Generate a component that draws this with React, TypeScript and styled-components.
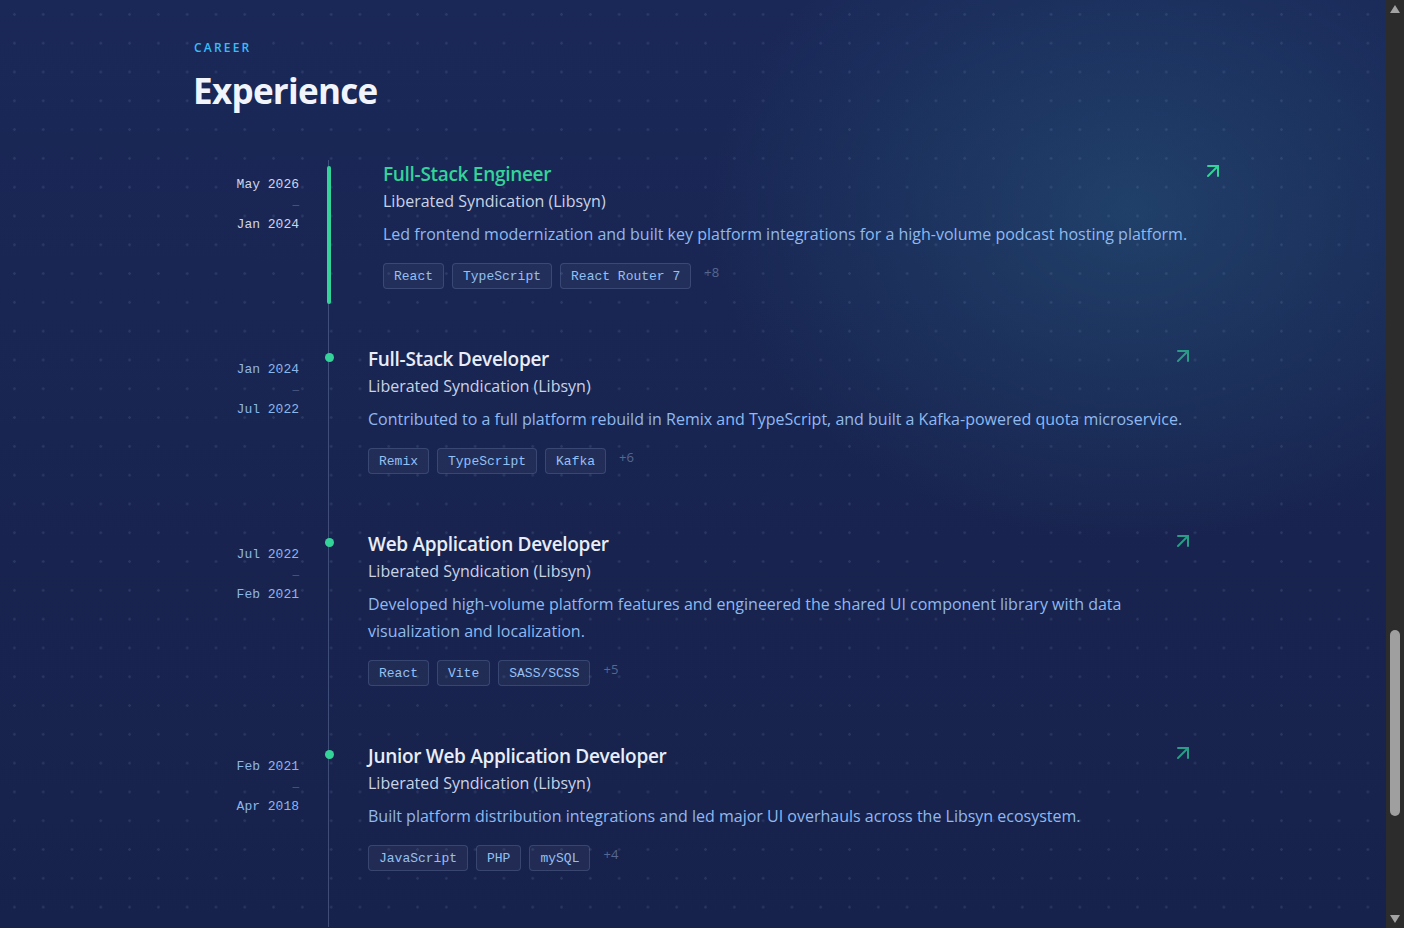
import React, { FC, ReactElement } from 'react'
import styled, { createGlobalStyle, css } from 'styled-components'
import { ArrowUpRight } from 'lucide-react'

const GlobalStyle = createGlobalStyle`
  html, body {
    margin: 0;
    padding: 0;
    height: 100%;
    overflow: hidden;
    background: #18244f;
  }
  * {
    box-sizing: border-box;
  }
`

const Page = styled.div`
  display: flex;
  height: 100vh;
  width: 100vw;
`

const Main = styled.main`
  flex: 1;
  min-width: 0;
  overflow: hidden;
  background-color: #18244f;
  background-image:
    radial-gradient(circle at center, rgba(148, 170, 210, 0.14) 1px, transparent 1.6px),
    radial-gradient(560px 440px at 1130px 210px, rgba(40, 95, 130, 0.45), transparent 75%),
    linear-gradient(180deg, #1a2858 0%, #18244f 60%, #17224c 100%);
  background-size: 28.8px 28.8px, 100% 100%, 100% 100%;
  font-family: 'Open Sans', 'Noto Sans', sans-serif;
`

const Container = styled.section`
  max-width: 1000px;
  margin: 0 auto;
  padding: 39px 0 0 1px;
`

const Eyebrow = styled.div`
  font-size: 12px;
  line-height: 18px;
  letter-spacing: 2.2px;
  font-weight: 600;
  color: #38bdf8;
  text-transform: uppercase;
`

const Heading = styled.h2`
  margin: 12px 0 0 -1px;
  font-size: 35px;
  line-height: 44px;
  font-weight: 700;
  color: #f1f5fb;
  letter-spacing: -0.7px;
`

const Timeline = styled.div`
  margin-top: 47px;
`

const Row = styled.div`
  display: grid;
  grid-template-columns: 105px 1fr;
  column-gap: 29px;
`

const Dates = styled.div<{ $active?: boolean }>`
  padding-top: 15px;
  text-align: right;
  font-family: 'Liberation Mono', 'DejaVu Sans Mono', monospace;
  font-size: 13px;
  line-height: 20px;
  color: ${(p) => (p.$active ? '#cdd6e8' : '#8cb6ea')};
`

const DateDash = styled.div`
  font-size: 11px;
  color: #4d5d86;
`

const Body = styled.div`
  position: relative;
  border-left: 1px solid rgba(110, 128, 170, 0.45);
  padding: 0 0 56px 39px;
`

const Dot = styled.span`
  position: absolute;
  left: -4px;
  top: 8px;
  width: 9px;
  height: 9px;
  border-radius: 50%;
  background: #34d399;
`

const ActiveBar = styled.span`
  position: absolute;
  left: -2px;
  top: 6px;
  bottom: 41px;
  width: 4px;
  border-radius: 2px;
  background: #34d399;
`

const Card = styled.article<{ $active?: boolean }>`
  ${(p) =>
    p.$active &&
    css`
      transform: translateX(15px);
    `}
`

const TitleRow = styled.div`
  display: flex;
  justify-content: space-between;
  align-items: flex-start;
`

const Title = styled.h3<{ $active?: boolean }>`
  margin: 0;
  font-size: 19px;
  line-height: 28px;
  font-weight: 600;
  letter-spacing: -0.3px;
  color: ${(p) => (p.$active ? '#34d399' : '#e8edf7')};
`

const LinkIcon = styled.span<{ $active?: boolean }>`
  display: flex;
  margin: -1px -2px 0 0;
  color: ${(p) => (p.$active ? '#34d399' : '#2a9c87')};
  ${(p) =>
    p.$active &&
    css`
      transform: translateX(15px);
    `}
`

const Company = styled.div`
  font-size: 16px;
  line-height: 26px;
  color: #c9d3e6;
`

const Description = styled.p`
  margin: 7px 0 0;
  max-width: 826px;
  font-size: 16px;
  line-height: 27px;
  color: #8fb9f0;
`

const Tags = styled.div`
  display: flex;
  align-items: flex-start;
  gap: 8px;
  margin-top: 15px;
`

const Tag = styled.span`
  display: inline-flex;
  align-items: center;
  height: 26px;
  padding: 0 10px;
  border: 1px solid rgba(120, 140, 185, 0.28);
  border-radius: 4px;
  background: rgba(255, 255, 255, 0.045);
  font-family: 'Liberation Mono', 'DejaVu Sans Mono', monospace;
  font-size: 13px;
  color: #93c0f5;
`

const More = styled.span`
  margin-left: 5px;
  font-size: 13px;
  line-height: 18px;
  color: #566791;
`

const Scrollbar = styled.aside`
  width: 18px;
  flex-shrink: 0;
  display: flex;
  flex-direction: column;
  align-items: center;
  background: #2c2c2c;
`

const ScrollArrow = styled.span<{ $down?: boolean }>`
  height: 18px;
  display: flex;
  align-items: center;
  justify-content: center;

  &::before {
    content: '';
    border-left: 5px solid transparent;
    border-right: 5px solid transparent;
    ${(p) =>
      p.$down
        ? css`
            border-top: 8px solid #a3a3a3;
          `
        : css`
            border-bottom: 8px solid #a3a3a3;
          `}
  }
`

const Track = styled.div`
  flex: 1;
  width: 100%;
  display: flex;
  justify-content: center;
  padding-top: 612px;
`

const Thumb = styled.div`
  width: 10px;
  height: 186px;
  border-radius: 5px;
  background: #9f9f9f;
`

interface Job {
  from: string
  to: string
  title: string
  company: string
  description: string
  tags: string[]
  more: number
  active?: boolean
}

const jobs: Job[] = [
  {
    from: 'May 2026',
    to: 'Jan 2024',
    title: 'Full-Stack Engineer',
    company: 'Liberated Syndication (Libsyn)',
    description:
      'Led frontend modernization and built key platform integrations for a high-volume podcast hosting platform.',
    tags: ['React', 'TypeScript', 'React Router 7'],
    more: 8,
    active: true,
  },
  {
    from: 'Jan 2024',
    to: 'Jul 2022',
    title: 'Full-Stack Developer',
    company: 'Liberated Syndication (Libsyn)',
    description:
      'Contributed to a full platform rebuild in Remix and TypeScript, and built a Kafka-powered quota microservice.',
    tags: ['Remix', 'TypeScript', 'Kafka'],
    more: 6,
  },
  {
    from: 'Jul 2022',
    to: 'Feb 2021',
    title: 'Web Application Developer',
    company: 'Liberated Syndication (Libsyn)',
    description:
      'Developed high-volume platform features and engineered the shared UI component library with data visualization and localization.',
    tags: ['React', 'Vite', 'SASS/SCSS'],
    more: 5,
  },
  {
    from: 'Feb 2021',
    to: 'Apr 2018',
    title: 'Junior Web Application Developer',
    company: 'Liberated Syndication (Libsyn)',
    description:
      'Built platform distribution integrations and led major UI overhauls across the Libsyn ecosystem.',
    tags: ['JavaScript', 'PHP', 'mySQL'],
    more: 4,
  },
]

const ExperienceItem: FC<{ job: Job }> = ({ job }) => {
  return (
    <Row>
      <Dates $active={job.active}>
        <div>{job.from}</div>
        <DateDash>—</DateDash>
        <div>{job.to}</div>
      </Dates>
      <Body>
        {job.active ? <ActiveBar /> : <Dot />}
        <Card $active={job.active}>
          <TitleRow>
            <Title $active={job.active}>{job.title}</Title>
            <LinkIcon $active={job.active}>
              <ArrowUpRight size={24} strokeWidth={2} />
            </LinkIcon>
          </TitleRow>
          <Company>{job.company}</Company>
          <Description>{job.description}</Description>
          <Tags>
            {job.tags.map((t) => (
              <Tag key={t}>{t}</Tag>
            ))}
            <More>+{job.more}</More>
          </Tags>
        </Card>
      </Body>
    </Row>
  )
}

const App: FC = (): ReactElement => {
  return (
    <Page>
      <GlobalStyle />
      <Main>
        <Container>
          <Eyebrow>Career</Eyebrow>
          <Heading>Experience</Heading>
          <Timeline>
            {jobs.map((job) => (
              <ExperienceItem key={job.title} job={job} />
            ))}
          </Timeline>
        </Container>
      </Main>
      <Scrollbar>
        <ScrollArrow />
        <Track>
          <Thumb />
        </Track>
        <ScrollArrow $down />
      </Scrollbar>
    </Page>
  )
}

export default App
